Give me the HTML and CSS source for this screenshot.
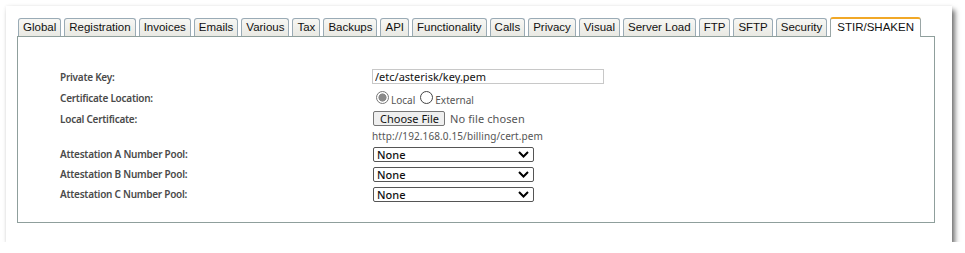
FILE: index.html
```html
<!DOCTYPE html>
<html>
<head>
<meta charset="utf-8">
<link rel="stylesheet" href="styles.css">
</head>
<body>
<div class="card">
  <ul class="tabs">
    <li class="tab">Global</li>
    <li class="tab">Registration</li>
    <li class="tab">Invoices</li>
    <li class="tab">Emails</li>
    <li class="tab">Various</li>
    <li class="tab">Tax</li>
    <li class="tab">Backups</li>
    <li class="tab">API</li>
    <li class="tab">Functionality</li>
    <li class="tab">Calls</li>
    <li class="tab">Privacy</li>
    <li class="tab">Visual</li>
    <li class="tab">Server Load</li>
    <li class="tab">FTP</li>
    <li class="tab">SFTP</li>
    <li class="tab">Security</li>
    <li class="tab active">STIR/SHAKEN</li>
  </ul>
  <div class="panel">
    <div class="row"><div class="label">Private Key:</div><div class="field"><input class="text" type="text" value="/etc/asterisk/key.pem"></div></div>
    <div class="row"><div class="label">Certificate Location:</div><div class="field radios"><label class="radio"><span class="dot on"></span>Local</label><label class="radio"><span class="dot"></span>External</label></div></div>
    <div class="row"><div class="label">Local Certificate:</div><div class="field"><span class="btn">Choose File</span><span class="nofile">No file chosen</span></div></div>
    <div class="row url"><div class="label"></div><div class="field urltext">http://192.168.0.15/billing/cert.pem</div></div>
    <div class="row pool"><div class="label">Attestation A Number Pool:</div><div class="field"><div class="select">None<svg width="11" height="7" viewBox="0 0 11 7"><path d="M1 1l4.5 4.5L10 1" fill="none" stroke="#000" stroke-width="2"/></svg></div></div></div>
    <div class="row pool"><div class="label">Attestation B Number Pool:</div><div class="field"><div class="select">None<svg width="11" height="7" viewBox="0 0 11 7"><path d="M1 1l4.5 4.5L10 1" fill="none" stroke="#000" stroke-width="2"/></svg></div></div></div>
    <div class="row pool"><div class="label">Attestation C Number Pool:</div><div class="field"><div class="select">None<svg width="11" height="7" viewBox="0 0 11 7"><path d="M1 1l4.5 4.5L10 1" fill="none" stroke="#000" stroke-width="2"/></svg></div></div></div>
  </div>
</div>
</body>
</html>
```

FILE: styles.css
```css
html, body { margin: 0; padding: 0; background: #fff; }
body { padding: 6px 0 0 6px; font-family: "Liberation Sans", Arial, sans-serif; }
.card {
  width: 946px;
  height: 236px;
  box-sizing: border-box;
  background: #fff;
  box-shadow: 3px 4px 5px rgba(0,0,0,0.55), 0 0 3px rgba(0,0,0,0.08);
  padding: 10px 17px 0 11px;
}
.tabs {
  list-style: none;
  margin: 0;
  padding: 0 0 0 1px;
  display: flex;
  align-items: flex-end;
  height: 20px;
}
.tab {
  white-space: nowrap;
  height: 18px;
  box-sizing: border-box;
  margin-right: 3px;
  padding: 0 4px;
  font-size: 11.5px;
  line-height: 17px;
  color: #111;
  border: 1px solid #9aabb6;
  border-bottom: none;
  border-radius: 3px 3px 0 0;
  background: linear-gradient(#f7f7f4, #e9e9e3);
}
.tab.active {
  height: 20px;
  padding: 0 6px;
  background: #fff;
  border-top: 2px solid #f1a827;
  border-color: #f1a827 #9aa6a6 #9aa6a6 #9aa6a6;
  line-height: 17px;
  position: relative;
  top: 1px;
}
.panel {
  border: 1px solid #8f9f9c;
  height: 187px;
  box-sizing: border-box;
  padding: 29px 0 0 42px;
  font-family: "Noto Sans", sans-serif;
  font-size: 10px;
  color: #444;
}
.row { display: flex; align-items: center; height: 21px; }
.row.url { height: 14px; margin-bottom: 1px; }
.row.pool { height: 20px; }
.label { width: 312px; font-weight: 600; letter-spacing: -0.25px; color: #4a4a4a; }
.field { display: flex; align-items: center; }
.text {
  width: 232px; height: 15px; box-sizing: border-box;
  border: 1px solid #c8c8c8; padding: 0 2px;
  font-family: "Noto Sans", sans-serif; font-size: 11px; color: #111;
  margin: 0;
}
.radios { gap: 5px; padding-left: 4px; }
.radio { display: flex; align-items: center; gap: 2px; font-size: 10px; color: #555; padding-top: 4px; }
.dot {
  width: 13px; height: 13px; border-radius: 50%;
  border: 1px solid #444; box-sizing: border-box; background: #fff;
  margin-top: -5px;
}
.dot.on { border-color: #777; background: radial-gradient(circle, #8a8a8a 0 3.8px, #fff 4.3px); }
.btn {
  height: 15px; box-sizing: border-box; padding: 0 5px 0 6px;
  border: 1px solid #767676; border-radius: 2px; background: #efefef;
  font-size: 11px; line-height: 13px; color: #111; margin-left: 1px;
}
.nofile { font-size: 11px; color: #555; margin-left: 5px; letter-spacing: 0.1px; }
.urltext { font-size: 10px; color: #555; letter-spacing: 0.1px; }
.select {
  width: 161px; height: 15px; box-sizing: border-box; margin-left: 1px;
  border: 1px solid #555; border-radius: 2px;
  display: flex; align-items: center; justify-content: space-between;
  padding: 0 4px 0 3px; font-size: 11px; color: #111; font-weight: 500;
}
```
